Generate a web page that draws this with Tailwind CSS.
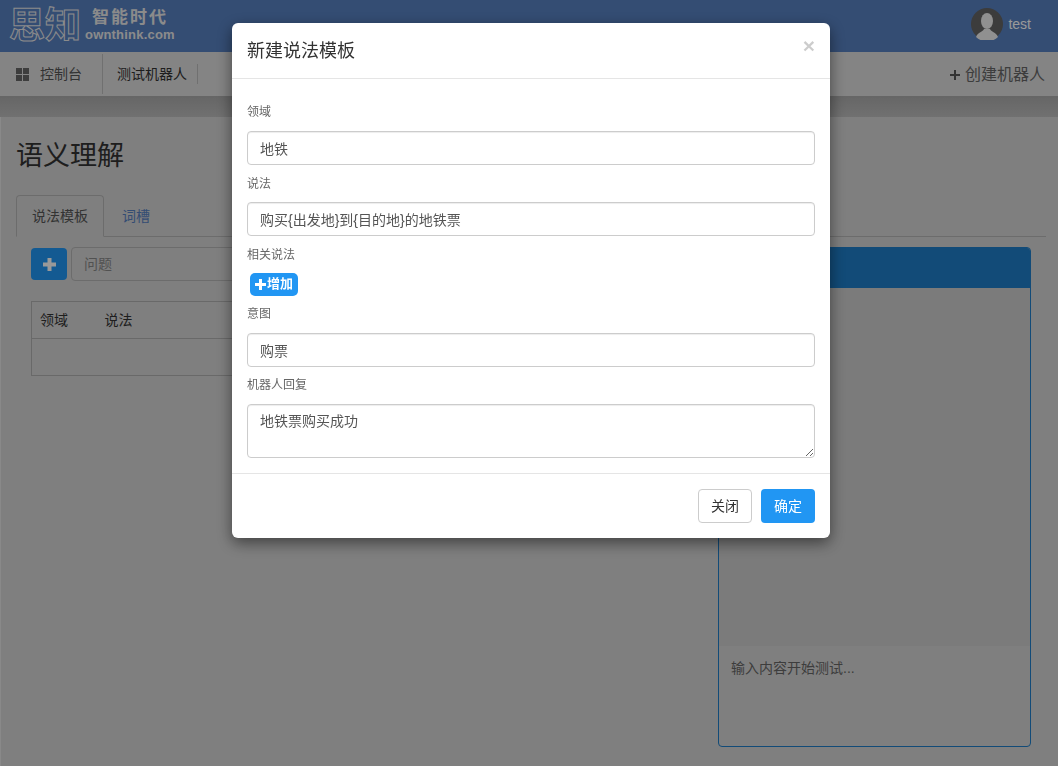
<!DOCTYPE html>
<html lang="zh">
<head>
    <meta charset="UTF-8">
    <title>语义理解</title>
    <script src="https://cdn.jsdelivr.net/npm/@tailwindcss/browser@4"></script>
</head>
<body class="h-[766px] overflow-hidden bg-[#d4d4d4] font-['Liberation_Sans','Noto_Sans_CJK_SC',sans-serif] text-sm text-[#333]">
    <!-- header -->
    <header class="h-[52px] bg-[#5780c0] flex items-center justify-between">
        <div class="flex items-center pl-[9px]">
            <span class="w-[72px] text-[36px] leading-[40px] font-bold text-transparent [-webkit-text-stroke:1px_#e8e8e8] whitespace-nowrap">思知</span>
            <div class="ml-[4px] pb-[4px] flex flex-col items-center text-[#e8e8e8] font-bold">
                <span class="text-[17px] leading-[18px] tracking-[2px] font-['Noto_Sans_CJK_SC',sans-serif]">智能时代</span>
                <span class="mt-[3px] text-[13px] leading-[13px] tracking-[0.2px]">ownthink.com</span>
            </div>
        </div>
        <div class="flex items-center pr-[27px] pb-[4px]">
            <svg class="w-8 h-8" viewBox="0 0 32 32">
                <circle cx="16" cy="16" r="16" fill="#646464"/>
                <ellipse cx="16" cy="13" rx="6" ry="8" fill="#f0f0f0"/>
                <path d="M5 29c2-5 7-5 8-8h6c1 3 6 3 8 8a16 16 0 0 1-22 0z" fill="#f0f0f0"/>
            </svg>
            <span class="ml-[5px] text-white">test</span>
        </div>
    </header>

    <!-- nav -->
    <nav class="h-[44px] bg-[#dcdcdc] flex items-center">
        <div class="w-[103px] h-[40px] flex items-center pl-[16px] border-r border-[#bbb] text-[#555]">
            <svg class="w-[13px] h-[13px]" viewBox="0 0 13 13" fill="#666">
                <rect width="6" height="6"/><rect x="7" width="6" height="6"/>
                <rect y="7" width="6" height="6"/><rect x="7" y="7" width="6" height="6"/>
            </svg>
            <span class="ml-[11px]">控制台</span>
        </div>
        <div class="ml-[14px] h-[20px] pr-[10px] border-r border-[#bbb] flex items-center whitespace-nowrap">测试机器人</div>
        <div class="ml-auto pr-[13px] pt-[1px] text-base text-[#666] flex items-center">
            <svg class="w-[10px] h-[10px] mr-[5px]" viewBox="0 0 10 10" fill="#555"><rect x="4" width="2" height="10"/><rect y="4" width="10" height="2"/></svg>
            <span>创建机器人</span>
        </div>
    </nav>

    <div class="h-[21px] bg-gradient-to-b from-[#aaa] to-[#bcbcbc]"></div>

    <!-- page -->
    <main class="h-[649px] flex border-l border-[#e4e4e4]">
        <section class="flex-1 min-w-0 pl-[15px]">
            <h1 class="mt-[21px] text-[27px] leading-[36px] text-[#333]">语义理解</h1>
            <div class="mt-[21px] mr-[-340px] flex h-[42px] border-b border-[#b5b5b5]">
                <div class="w-[88px] h-[42px] pl-[15px] border border-b-[#d4d4d4] border-[#b5b5b5] rounded-t flex items-center text-[#555]">说法模板</div>
                <div class="ml-[18px] flex items-center text-[#5780c0]">词槽</div>
            </div>
            <div class="ml-[15px] mt-[10px] flex gap-[4px] items-center">
                <button class="w-9 h-8 rounded bg-[#2196f3] flex items-center justify-center">
                    <svg class="w-[13px] h-[13px]" viewBox="0 0 13 13" fill="#fff"><rect x="4.5" width="4" height="13"/><rect y="4.5" width="13" height="4"/></svg>
                </button>
                <input class="flex-1 min-w-0 h-[34px] px-3 border border-[#b5b5b5] rounded placeholder:text-[#888]" placeholder="问题">
            </div>
            <table class="ml-[15px] mt-[20px] w-[675px] border border-[#b0b0b0] border-collapse">
                <tbody>
                    <tr class="h-[37px] border-b border-[#b0b0b0]"><td class="w-[73px] pl-[8px]">领域</td><td>说法</td></tr>
                    <tr class="h-[37px]"><td></td><td></td></tr>
                </tbody>
            </table>
        </section>

        <aside class="w-[313px] h-[500px] mt-[130px] mr-[27px] ml-[12px] flex flex-col border border-[#1e7dc8] rounded overflow-hidden shrink-0">
            <div class="h-[40px] bg-[#1e7dc8]"></div>
            <div class="flex-1 bg-[#cdcdcd]"></div>
            <div class="h-[100px] px-3 pt-[12px] text-[#666]">输入内容开始测试...</div>
        </aside>
    </main>

    <!-- modal -->
    <div class="fixed inset-0 bg-black/40">
        <div class="ml-[232px] mt-[23px] w-[598px] h-[515px] bg-white rounded-md shadow-[0_5px_15px_rgba(0,0,0,0.5)]">
            <div class="h-[56px] px-[15px] border-b border-[#e5e5e5] flex items-center justify-between">
                <h4 class="text-lg text-[#333]">新建说法模板</h4>
                <span class="mb-[10px] text-[21px] font-bold text-black/20 leading-none">×</span>
            </div>
            <div class="px-[15px] pt-[26px]">
                <label class="block text-xs leading-[14px] text-[#666]">领域</label>
                <input class="mt-[12px] block w-full h-[34px] px-3 border border-[#ccc] rounded text-[#555] shadow-[inset_0_1px_1px_rgba(0,0,0,0.075)]" value="地铁">
                <label class="mt-[12px] block text-xs leading-[14px] text-[#666]">说法</label>
                <input class="mt-[11px] block w-full h-[34px] px-3 border border-[#ccc] rounded text-[#555] shadow-[inset_0_1px_1px_rgba(0,0,0,0.075)]" value="购买{出发地}到{目的地}的地铁票">
                <label class="mt-[12px] block text-xs leading-[14px] text-[#666]">相关说法</label>
                <button class="mt-[11px] ml-[3px] w-[48px] h-[23px] rounded-[5px] bg-[#2196f3] text-white text-[13px] font-bold flex items-center justify-center">
                    <svg class="w-[11px] h-[11px] mr-[1px]" viewBox="0 0 11 11" fill="#fff"><rect x="4" width="3" height="11"/><rect y="4" width="11" height="3"/></svg>增加
                </button>
                <label class="mt-[11px] block text-xs leading-[14px] text-[#666]">意图</label>
                <input class="mt-[12px] block w-full h-[34px] px-3 border border-[#ccc] rounded text-[#555] shadow-[inset_0_1px_1px_rgba(0,0,0,0.075)]" value="购票">
                <label class="mt-[11px] block text-xs leading-[14px] text-[#666]">机器人回复</label>
                <textarea class="mt-[12px] block w-full h-[54px] px-3 py-[6px] border border-[#ccc] rounded text-[#555] shadow-[inset_0_1px_1px_rgba(0,0,0,0.075)]">地铁票购买成功</textarea>
            </div>
            <div class="mt-[15px] pt-[15px] px-[15px] border-t border-[#e5e5e5] flex justify-end gap-[9px]">
                <button class="w-[54px] h-[34px] border border-[#ccc] rounded bg-white text-[#333]">关闭</button>
                <button class="w-[54px] h-[34px] rounded bg-[#2196f3] text-white">确定</button>
            </div>
        </div>
    </div>
</body>
</html>
